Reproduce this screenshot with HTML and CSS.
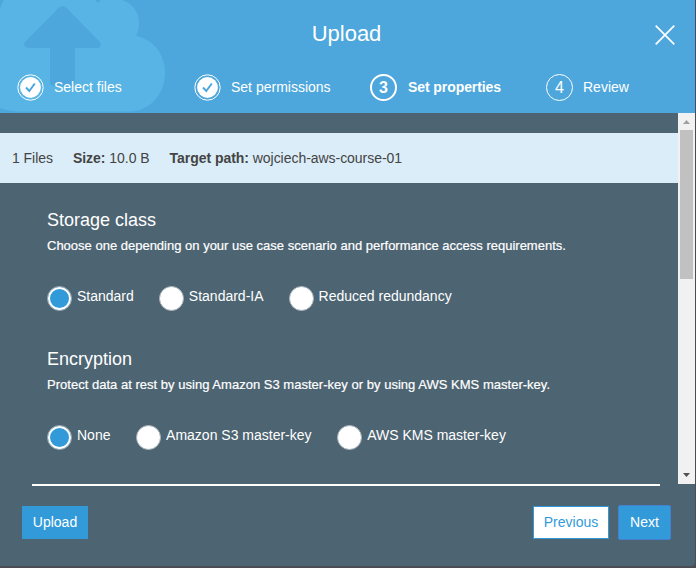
FILE: index.html
```html
<!DOCTYPE html>
<html lang="en">
<head>
<meta charset="utf-8">
<title>Upload</title>
<link rel="stylesheet" href="styles.css">
</head>
<body>
<div class="dialog">
  <header class="header">
    <svg class="cloud" width="170" height="113" viewBox="0 0 170 113" aria-hidden="true">
      <path fill="#58b4e4" d="M0 9Q1 4 4 0H95L98 3L101 0H122C132 3 139 12 139 22Q139 30 136 36C153 39 165 54 165 73C165 95 149 111 130 111.5H16Q7 111 0 108Z"/>
      <path fill="#4da7dc" d="M59 7.500Q62.500 4.500 66 7.500L100 42Q102.500 46 98 48H75V82Q75 86 71 86H54Q50 86 50 82V48H28Q22 46 25 42Z"/>
    </svg>
    <h1 class="title">Upload</h1>
    <button class="close" aria-label="Close"><svg width="22" height="22" viewBox="0 0 22 22"><path d="M1.700 1.700L20.300 20.300M20.300 1.700L1.700 20.300" stroke="#fff" stroke-width="1.700" fill="none"/></svg></button>
    <nav class="steps">
      <div class="step"><svg class="badge" width="27" height="27" viewBox="0 0 27 27"><circle cx="13.500" cy="13.500" r="12.700" fill="none" stroke="#fff"/><circle cx="13.500" cy="13.500" r="10.400" fill="#fff"/><path d="M9 13.500L12.300 17L17.800 9.500" fill="none" stroke="#4da7dc" stroke-width="2"/></svg><span class="label">Select files</span></div>
      <div class="step"><svg class="badge" width="27" height="27" viewBox="0 0 27 27"><circle cx="13.500" cy="13.500" r="12.700" fill="none" stroke="#fff"/><circle cx="13.500" cy="13.500" r="10.400" fill="#fff"/><path d="M9 13.500L12.300 17L17.800 9.500" fill="none" stroke="#4da7dc" stroke-width="2"/></svg><span class="label">Set permissions</span></div>
      <div class="step current"><span class="badge number">3</span><span class="label">Set properties</span></div>
      <div class="step"><span class="badge number">4</span><span class="label">Review</span></div>
    </nav>
  </header>
  <div class="viewport">
    <main class="content">
      <div class="summary"><span>1 Files</span><span><b>Size:</b> 10.0 B</span><span class="path"><b>Target path:</b> wojciech-aws-course-01</span></div>
      <section class="group">
        <h2>Storage class</h2>
        <p>Choose one depending on your use case scenario and performance access requirements.</p>
        <div class="options">
          <div class="option"><i class="radio checked"></i><span>Standard</span></div>
          <div class="option"><i class="radio"></i><span>Standard-IA</span></div>
          <div class="option"><i class="radio"></i><span>Reduced redundancy</span></div>
        </div>
      </section>
      <section class="group">
        <h2>Encryption</h2>
        <p class="encryption-note">Protect data at rest by using Amazon S3 master-key or by using AWS KMS master-key.</p>
        <div class="options encryption">
          <div class="option"><i class="radio checked"></i><span>None</span></div>
          <div class="option"><i class="radio"></i><span>Amazon S3 master-key</span></div>
          <div class="option"><i class="radio"></i><span>AWS KMS master-key</span></div>
        </div>
      </section>
    </main>
    <div class="scrollbar">
      <svg width="17" height="17" viewBox="0 0 17 17"><path fill="#a0a0a0" d="M5 11L8.500 7L12 11Z"/></svg>
      <div class="thumb"></div>
      <svg width="17" height="17" viewBox="0 0 17 17"><path fill="#505050" d="M5 6H12L8.500 10Z"/></svg>
    </div>
  </div>
  <footer class="footer">
    <button class="btn upload">Upload</button>
    <button class="btn previous">Previous</button>
    <button class="btn next">Next</button>
  </footer>
</div>
</body>
</html>
```

FILE: styles.css
```css
* { box-sizing: border-box; }
body { margin: 0; width: 696px; height: 568px; overflow: hidden; background: #4a4e54; font: 14px/20px "Liberation Sans", Arial, sans-serif; color: #fff; }
h1, h2, p { margin: 0; font-weight: normal; }
button { font: inherit; padding: 0; border: 0; background: none; }
.dialog { width: 695px; height: 566px; background: #4d6472; border-radius: 0 0 4px 0; }
.header { position: relative; height: 113px; background: #4da7dc; }
.cloud { position: absolute; left: 0; top: 0; }
.title { position: relative; padding-top: 19px; padding-right: 2px; height: 73px; text-align: center; font-size: 22px; line-height: 30px; }
.close { position: absolute; left: 654px; top: 24px; width: 22px; height: 22px; }
.close svg { display: block; }
.steps { position: relative; display: grid; grid-template-columns: 177px 176px 176px 140px; padding-left: 17px; }
.step { display: flex; align-items: center; gap: 10px; height: 28px; white-space: nowrap; }
.badge { flex: 0 0 27px; width: 27px; height: 27px; }
.number { border: 1px solid #fff; border-radius: 50%; text-align: center; font-size: 16px; line-height: 26px; }
.current { gap: 11px; font-weight: bold; letter-spacing: -.08px; }
.current .number { border-width: 2px; line-height: 24px; }
.viewport { display: flex; height: 371px; }
.content { flex: 1; padding-top: 20px; }
.summary { display: flex; gap: 20px; height: 50px; padding: 15px 12px; background: #dbedf8; color: #444; white-space: nowrap; letter-spacing: -.04px; }
.group { height: 139px; padding: 25px 0 0 47px; }
h2 { font-size: 18px; line-height: 24px; }
.group p { height: 42px; padding-top: 5px; font-size: 13px; line-height: 18px; white-space: nowrap; -webkit-text-stroke: .2px #fff; }
.group .encryption-note { letter-spacing: .02px; }
.options { display: flex; gap: 25px; padding-top: 12px; }
.encryption { gap: 25.6px; }
.option { display: flex; gap: 5px; white-space: nowrap; }
.option span { line-height: 20px; }
.radio { width: 25px; height: 25px; border-radius: 50%; background: #fff; border: 1px solid #a6afb6; }
.checked { background: #329ad9; box-shadow: inset 0 0 0 2px #fff; }
.scrollbar { width: 17px; background: #f1f1f1; display: flex; flex-direction: column; }
.scrollbar svg { display: block; }
.thumb { width: 13px; height: 149px; margin: 0 2px auto; background: #c1c1c1; }
.footer { display: flex; align-items: center; margin: 0 35px 0 32px; height: 75px; border-top: 2px solid #fff; }
.btn { height: 33px; line-height: 31px; color: #fff; }
.upload { width: 66px; margin: 0 auto 0 -10px; background: #329ad9; }
.previous { width: 76px; color: #329ad9; background: #fff; border: 1px solid #329ad9; }
.next { width: 53px; height: 35px; margin: 0 -11px 0 9px; background: #329ad9; border: 1px solid #467fd0; border-radius: 2px; }
```
